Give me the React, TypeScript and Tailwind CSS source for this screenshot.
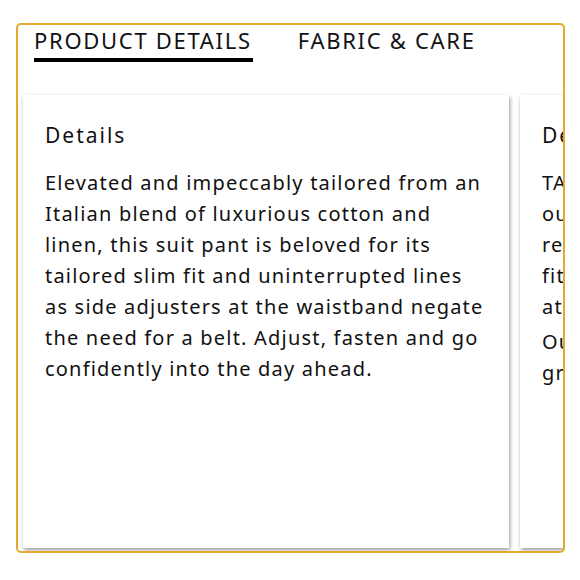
export default function App() {
  const tabs = ["PRODUCT DETAILS", "FABRIC & CARE"];
  const body = [
    "Elevated and impeccably tailored from an",
    "Italian blend of luxurious cotton and",
    "linen, this suit pant is beloved for its",
    "tailored slim fit and uninterrupted lines",
    "as side adjusters at the waistband negate",
    "the need for a belt. Adjust, fasten and go",
    "confidently into the day ahead.",
  ];
  const body2 = [
    "TAILORED FIT: A tailored fit that sits",
    "our slim and regular fits, offering a",
    "refined silhouette. Fits true to size;",
    "fitted through the thigh and tapered",
    "at the leg opening.",
  ];
  const body3 = ["Our model is 6'1\" and wears a size 32 in", "gray."];
  return (
    <div className="w-[580px] h-[580px] bg-white pt-[23px] pl-[16px] font-['Noto_Sans',sans-serif] text-[#111]">
      <div className="w-[549px] h-[530px] border-2 border-[#e3aa2e] rounded-[5px] overflow-hidden flex flex-col">
        <div className="flex gap-[46px] pl-[16px] h-[70px]">
          {tabs.map((t, i) => (
            <div key={t} className="flex flex-col">
              <span className="text-[22px] leading-[30px] tracking-[1.7px] whitespace-nowrap">{t}</span>
              {i === 0 && <div className="h-[4px] bg-black mt-[3px] mr-[-1px]" />}
            </div>
          ))}
        </div>
        <div className="flex gap-[11px] pl-[5px] flex-1 pb-[3px]">
          <div className="w-[486px] shrink-0 bg-white shadow-[1px_2px_4px_rgba(0,0,0,0.4)] px-[22px] pt-[26px] whitespace-nowrap">
            <h3 className="text-[21px] tracking-[2px] leading-[28px]">Details</h3>
            <p className="mt-[18px] text-[20px] leading-[31px] tracking-[1.2px]">
              {body.map((l) => (
                <span key={l} className="block">{l}</span>
              ))}
            </p>
          </div>
          <div className="w-[486px] shrink-0 bg-white shadow-[1px_2px_4px_rgba(0,0,0,0.4)] px-[22px] pt-[26px] whitespace-nowrap">
            <h3 className="text-[21px] tracking-[2px] leading-[28px]">Details</h3>
            <p className="mt-[18px] text-[20px] leading-[31px] tracking-[1.2px]">
              {body2.map((l) => (
                <span key={l} className="block">{l}</span>
              ))}
            </p>
            <p className="mt-[4px] text-[20px] leading-[31px] tracking-[1.2px]">
              {body3.map((l) => (
                <span key={l} className="block">{l}</span>
              ))}
            </p>
          </div>
        </div>
      </div>
    </div>
  );
}
